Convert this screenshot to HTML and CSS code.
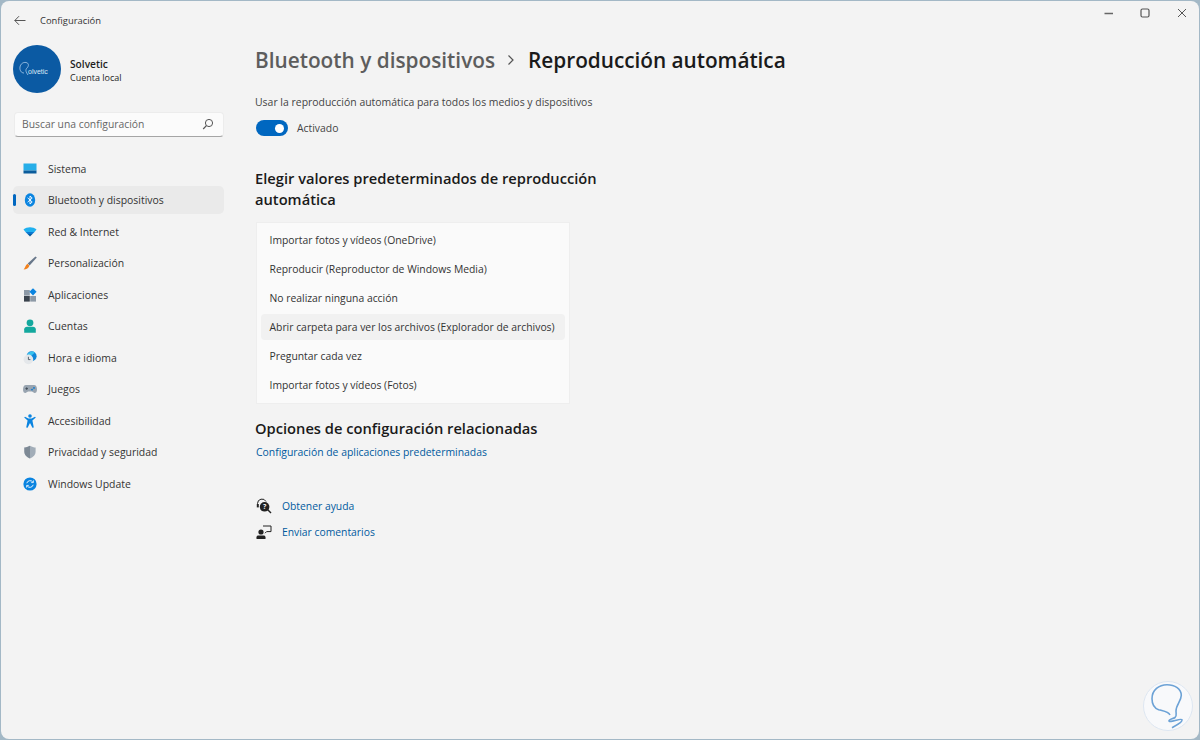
FILE: index.html
```html
<!DOCTYPE html>
<html lang="es">
<head>
<meta charset="utf-8">
<title>Configuración</title>
<link rel="stylesheet" href="styles.css">
</head>
<body>
<div class="window">
  <header class="titlebar">
    <svg class="back" width="12" height="12" viewBox="0 0 12 12"><path d="M5 1.2 0.8 5.5 5 9.8M0.8 5.5H11.5" fill="none" stroke="#555" stroke-width="1"/></svg>
    <span class="apptitle">Configuración</span>
    <div class="winbtns">
      <svg width="10" height="10" viewBox="0 0 10 10"><path d="M0.5 5.5H9" stroke="#666" stroke-width="1.3"/></svg>
      <svg width="10" height="10" viewBox="0 0 10 10"><rect x="1" y="1" width="8" height="8" rx="1.5" fill="none" stroke="#555" stroke-width="1.2"/></svg>
      <svg width="10" height="10" viewBox="0 0 10 10"><path d="M1 1 9 9M9 1 1 9" stroke="#555" stroke-width="1"/></svg>
    </div>
  </header>
  <div class="main">
    <aside class="sidebar">
      <div class="profile">
        <div class="avatar">
          <svg class="avatar-mark" width="16" height="16" viewBox="0 0 16 16"><path d="M6 12C3 12 1.5 9 2 6S5 1 8 1.5 11 5 9 7 8 11 10 14" fill="none" stroke="#a9c9e8" stroke-width="0.8"/></svg>
          <span class="avatar-text">olvetic</span>
        </div>
        <div class="profile-text">
          <span class="profile-name">Solvetic</span>
          <span class="profile-sub">Cuenta local</span>
        </div>
      </div>
      <div class="search">
        <span>Buscar una configuración</span>
        <svg width="12" height="12" viewBox="0 0 12 12"><circle cx="7" cy="5" r="3.6" fill="none" stroke="#555" stroke-width="1"/><path d="M4.4 7.6 1.2 11" stroke="#555" stroke-width="1.2"/></svg>
      </div>
      <nav class="nav">
        <a class="nav-item">
          <svg class="nav-icon" viewBox="0 0 14 14"><rect x="0.5" y="1.5" width="13" height="7" fill="#27aee8"/><rect x="0.5" y="8.5" width="13" height="3" fill="#0b5c9c"/></svg>
          <span>Sistema</span>
        </a>
        <a class="nav-item is-active">
          <svg class="nav-icon" viewBox="0 0 14 14"><ellipse cx="7" cy="7" rx="5.2" ry="6.8" fill="#0a84e0"/><path d="M4.6 4.8 9.2 9 7 11V3L9.2 5 4.6 9.2" fill="none" stroke="#fff" stroke-width="0.9"/></svg>
          <span>Bluetooth y dispositivos</span>
        </a>
        <a class="nav-item">
          <svg class="nav-icon" viewBox="0 0 14 14"><path d="M0.5 4.5C4 1.5 10 1.5 13.5 4.5L11.5 7H2.5Z" fill="#1fb0ef"/><path d="M2.5 7H11.5L9.5 9H4.5Z" fill="#0a78d0"/><path d="M4.5 9H9.5L7 11.6Z" fill="#075a9e"/></svg>
          <span>Red &amp; Internet</span>
        </a>
        <a class="nav-item">
          <svg class="nav-icon" viewBox="0 0 14 14"><path d="M12.4 0.4 13.8 1.6 6.6 9.4 4.7 7.6Z" fill="#68778a"/><path d="M4.5 7.8 6.4 9.7C5.8 12 3.4 13.2 0.6 13.6 2.4 11.8 2.2 9 4.5 7.8Z" fill="#f2811d"/></svg>
          <span>Personalización</span>
        </a>
        <a class="nav-item">
          <svg class="nav-icon" viewBox="0 0 14 14"><rect x="1" y="2" width="5.8" height="5.6" fill="#8d99a6"/><rect x="1" y="8" width="5.8" height="5.6" fill="#3a434d"/><rect x="7.2" y="8" width="5.8" height="5.6" fill="#8d99a6"/><path d="M10 0.2 13.6 3.8 10 7.4 6.4 3.8Z" fill="#0a84e0"/></svg>
          <span>Aplicaciones</span>
        </a>
        <a class="nav-item">
          <svg class="nav-icon" viewBox="0 0 14 14"><circle cx="7" cy="3.8" r="3.4" fill="#13a89e"/><path d="M1.2 13.8V10.2C1.2 8.8 2.4 7.8 4 7.8H10C11.6 7.8 12.8 8.8 12.8 10.2V13.8Z" fill="#13a89e"/></svg>
          <span>Cuentas</span>
        </a>
        <a class="nav-item">
          <svg class="nav-icon" viewBox="0 0 14 14"><circle cx="8.6" cy="5.2" r="5" fill="#0f86d8"/><path d="M4 5a5 5 0 0 1 8-3.4L8 5Z" fill="#39c2ee"/><circle cx="5.4" cy="8.4" r="4.8" fill="#e4e7ea"/><path d="M5.4 5.8V8.6H7.4" fill="none" stroke="#4a5560" stroke-width="0.9"/></svg>
          <span>Hora e idioma</span>
        </a>
        <a class="nav-item">
          <svg class="nav-icon" viewBox="0 0 14 14"><path d="M3 3H11C13 3 14 5 14 7.5S13 11 11.6 11C10.6 11 10 10 9 9.6H5C4 10 3.4 11 2.4 11 1 11 0 10 0 7.5S1 3 3 3Z" fill="#98a4b0"/><path d="M2.4 6.6H5M3.7 5.3V7.9" stroke="#3e4852" stroke-width="0.9"/><circle cx="9" cy="7.6" r="0.9" fill="#0a78d0"/><circle cx="11" cy="5.9" r="0.9" fill="#0a78d0"/></svg>
          <span>Juegos</span>
        </a>
        <a class="nav-item">
          <svg class="nav-icon" viewBox="0 0 14 14"><circle cx="7" cy="2" r="1.8" fill="#0a84e0"/><path d="M1.2 3.4 2 2.8 5.4 4.6H8.6L12 2.8 12.8 3.4 9.4 6.6 10.8 13.4 9.4 13.8 7 9 4.6 13.8 3.2 13.4 4.6 6.6Z" fill="#0a84e0"/></svg>
          <span>Accesibilidad</span>
        </a>
        <a class="nav-item">
          <svg class="nav-icon" viewBox="0 0 14 14"><path d="M7 0.8C9 2 11 2.6 12.6 2.6V7C12.6 10 10.4 12.2 7 13.4 3.6 12.2 1.4 10 1.4 7V2.6C3 2.6 5 2 7 0.8Z" fill="#a2adb8"/><path d="M7 0.8V13.4C3.6 12.2 1.4 10 1.4 7V2.6C3 2.6 5 2 7 0.8Z" fill="#7d8995"/></svg>
          <span>Privacidad y seguridad</span>
        </a>
        <a class="nav-item">
          <svg class="nav-icon" viewBox="0 0 14 14"><circle cx="7" cy="7" r="6.6" fill="#0a84e0"/><path d="M3.8 6.2A3.4 3.4 0 0 1 9.8 5M10.2 7.8A3.4 3.4 0 0 1 4.2 9" fill="none" stroke="#fff" stroke-width="0.9"/><path d="M10.4 3.4V5.6H8.2M3.6 10.6V8.4H5.8" fill="none" stroke="#fff" stroke-width="0.8"/></svg>
          <span>Windows Update</span>
        </a>
      </nav>
    </aside>
    <main class="content">
      <h1 class="crumbs">
        <span class="crumb-parent">Bluetooth y dispositivos</span>
        <svg class="crumb-sep" width="8" height="12" viewBox="0 0 8 12"><path d="M1.5 1.5 6 6 1.5 10.5" fill="none" stroke="#555" stroke-width="1.2"/></svg>
        <span class="crumb-current">Reproducción automática</span>
      </h1>
      <p class="toggle-label">Usar la reproducción automática para todos los medios y dispositivos</p>
      <div class="toggle-row">
        <span class="toggle"><span class="knob"></span></span>
        <span>Activado</span>
      </div>
      <h2 class="section-title defaults-title">Elegir valores predeterminados de reproducción automática</h2>
      <ul class="menu">
        <li>Importar fotos y vídeos (OneDrive)</li>
        <li>Reproducir (Reproductor de Windows Media)</li>
        <li>No realizar ninguna acción</li>
        <li class="is-selected">Abrir carpeta para ver los archivos (Explorador de archivos)</li>
        <li>Preguntar cada vez</li>
        <li>Importar fotos y vídeos (Fotos)</li>
      </ul>
      <h2 class="section-title related-title">Opciones de configuración relacionadas</h2>
      <a class="link">Configuración de aplicaciones predeterminadas</a>
      <div class="help">
        <a class="help-row">
          <svg width="16" height="16" viewBox="0 0 16 16"><path d="M1.5 7V5.5A4.5 4.5 0 0 1 10 3.5" fill="none" stroke="#222" stroke-width="1"/><rect x="0.8" y="6" width="2" height="3.4" fill="#222"/><circle cx="8.6" cy="8.8" r="4.8" fill="#222"/><path d="M12 12 15 15" stroke="#222" stroke-width="1.4"/><text x="8.6" y="11.4" class="help-q">?</text></svg>
          <span>Obtener ayuda</span>
        </a>
        <a class="help-row">
          <svg width="16" height="16" viewBox="0 0 16 16"><circle cx="5" cy="8" r="2.6" fill="#222"/><path d="M0.5 15V13.2C0.5 12 1.4 11.4 2.4 11.4H7.6C8.6 11.4 9.5 12 9.5 13.2V15Z" fill="#222"/><path d="M7 2H15V7.6H10.6L9 9.2" fill="none" stroke="#222" stroke-width="1"/></svg>
          <span>Enviar comentarios</span>
        </a>
      </div>
    </main>
  </div>
  <svg class="watermark" width="50" height="50" viewBox="0 0 50 50"><circle cx="25" cy="25" r="24.5" fill="#f8f9fb" stroke="#dde6f1"/><path d="M27 34C25 30 20 30 15.7 28.7 11 27 9 22 9 17.7 9 9 16 3.7 24 3.7 32 3.7 38.3 8 38.3 14.3 38.3 20 33 24 33 30 33 33 34 35 32 36.5 30 38 25.7 38 26 40 26 42 38 37 39 38.7 40 41 32 45 29 46.7" fill="none" stroke="#6ca2d6" stroke-width="1.6"/></svg>
</div>
</body>
</html>
```
FILE: styles.css
```css
* { box-sizing: border-box; }
html, body { margin: 0; height: 100%; }
body {
  background: #a3b8c6;
  font-family: "Open Sans", "Noto Sans", "Liberation Sans", sans-serif;
  color: #1f1f1f;
  overflow: hidden;
}
.window {
  position: relative;
  width: 1198px;
  height: 738px;
  margin-left: 1px;
  margin-top: 1px;
  background: #f3f3f3;
  border-radius: 8px;
  display: flex;
  flex-direction: column;
  overflow: hidden;
}
.titlebar {
  height: 39px;
  display: flex;
  align-items: center;
  padding-left: 13px;
  flex: none;
}
.apptitle { margin-left: 14px; font-size: 9.4px; color: #333; }
.winbtns {
  margin-left: auto;
  align-self: flex-start;
  display: flex;
  gap: 26.5px;
  padding: 7px 12.5px 0 0;
}
.main { display: flex; flex: 1; min-height: 0; }
.sidebar { width: 254px; flex: none; padding: 5px 0 0 12px; }
.profile { display: flex; align-items: center; gap: 9px; }
.avatar {
  position: relative;
  width: 48px;
  height: 48px;
  border-radius: 50%;
  background: #0b5aa3;
  color: #dbe8f5;
}
.avatar-mark { position: absolute; left: 5px; top: 16px; }
.avatar-text { position: absolute; left: 15px; top: 22px; font-size: 7px; line-height: 10px; font-family: "Liberation Sans", sans-serif; }
.profile-text { display: flex; flex-direction: column; padding-top: 3px; }
.profile-name { font-size: 10.2px; font-weight: 600; line-height: 14px; }
.profile-sub { font-size: 9px; line-height: 13px; }
.search {
  width: 210px;
  height: 25px;
  margin: 18.5px 0 0 1px;
  background: #fbfbfb;
  border: 1px solid #ececec;
  border-bottom-color: #a5a5a5;
  border-radius: 4px;
  display: flex;
  align-items: center;
  justify-content: space-between;
  padding: 0 9px 0 7px;
  font-size: 10.35px;
  color: #666;
}
.nav { display: flex; flex-direction: column; gap: 3.5px; margin-top: 18px; }
.nav-item {
  position: relative;
  width: 211px;
  height: 28px;
  display: flex;
  align-items: center;
  gap: 11px;
  padding-left: 10px;
  border-radius: 5px;
  font-size: 10.45px;
  color: #333;
}
.nav-icon { width: 14px; height: 14px; flex: none; }
.is-active { background: #eaeaea; }
.is-active::before {
  content: "";
  position: absolute;
  left: 0;
  top: 8px;
  width: 3px;
  height: 12px;
  border-radius: 2px;
  background: #0067c0;
}
.content { flex: 1; }
.crumbs { margin: 5px 0 0; display: flex; align-items: center; font-weight: 600; font-size: 20.8px; line-height: 30px; }
.crumb-parent { color: #5d5d5d; }
.crumb-sep { margin: 0 13px 0 12px; }
.crumb-current { color: #1a1a1a; letter-spacing: -0.03px; }
.toggle-label { margin: 20px 0 0; font-size: 10.45px; line-height: 14px; color: #444; }
.toggle-row { display: flex; align-items: center; gap: 9px; margin-top: 11px; font-size: 10.4px; color: #444; }
.toggle {
  width: 32px;
  height: 16px;
  margin-left: 1px;
  border-radius: 8px;
  background: #0067c0;
  display: flex;
  justify-content: flex-end;
  align-items: center;
  padding-right: 4px;
}
.knob { width: 9px; height: 9px; border-radius: 50%; background: #fff; }
.section-title { margin: 0; font-size: 14.7px; font-weight: 600; line-height: 21.5px; color: #1a1a1a; }
.defaults-title { width: 390px; margin-top: 31.75px; }
.menu {
  list-style: none;
  margin: 11px 0 0 1px;
  padding: 4.25px 4px;
  width: 313.5px;
  background: #fafafa;
  border: 1px solid #eee;
  font-size: 10.36px;
  color: #333;
}
.menu li { height: 26px; margin-bottom: 3.1px; padding-left: 8.5px; display: flex; align-items: center; border-radius: 4px; white-space: nowrap; }
.menu li:last-child { margin-bottom: 0; }
.is-selected { background: #f1f1f1; }
.related-title { margin-top: 14.5px; }
.link { display: block; margin-top: 4.5px; padding-left: 1px; font-size: 10.4px; line-height: 16px; color: #005a9e; }
.help { display: flex; flex-direction: column; gap: 10px; margin-top: 37.5px; padding-left: 1px; }
.help-row { display: flex; align-items: center; gap: 10px; font-size: 10.35px; height: 16px; color: #005a9e; }
.help-q { font-size: 7px; fill: #f3f3f3; text-anchor: middle; font-weight: 700; }
.watermark { position: absolute; right: 6px; bottom: 8px; }
```
